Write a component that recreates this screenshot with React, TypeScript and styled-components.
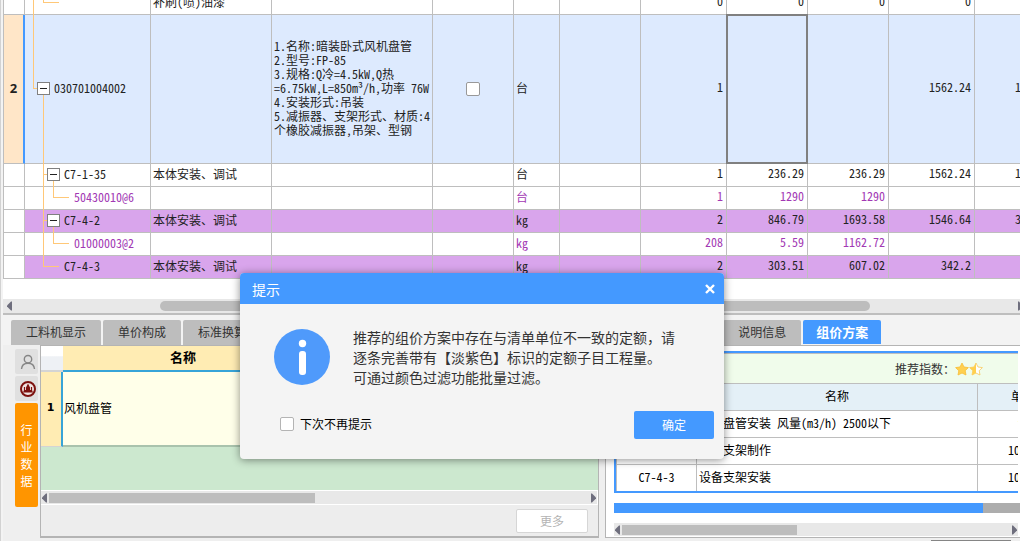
import React from 'react';
import styled, { createGlobalStyle, css } from 'styled-components';

const line = '#bebebe';
const blue = '#4499ff';

const GlobalStyle = createGlobalStyle`
  * { box-sizing: border-box; }
  body {
    margin: 0;
    overflow: hidden;
    background: #f3f3f3;
    color: #222;
    font: 12px/14px "Noto Sans CJK SC", sans-serif;
  }
  button, input { font: inherit; margin: 0; padding: 0; }
`;

const Window = styled.div`
  position: relative;
  display: flex;
  flex-direction: column;
  height: 100vh;
  min-height: 520px;
  padding-left: 2px;
  border-left: 1px solid #d2d2d2;
  overflow: hidden;
`;

/* ---------- bill of quantities grid ---------- */

const GridView = styled.div`
  flex: none;
  height: 299px;
  overflow: hidden;
  background: #fff;
`;

const BillTable = styled.table`
  table-layout: fixed;
  width: 1058px;
  margin-top: -8px;
  border-collapse: separate;
  border-spacing: 0;
  border-left: 1px solid ${line};
  font-feature-settings: "hwid";
`;

type Tone = 'plain' | 'current' | 'marked' | 'material';

const BillRow = styled.tr<{ $tone: Tone }>`
  height: ${p => (p.$tone === 'current' ? 149 : 23)}px;
  color: ${p => (p.$tone === 'material' ? '#a238b4' : '#222')};
  background: ${p => (p.$tone === 'current' ? '#ddeafe' : p.$tone === 'marked' ? '#d9a5ec' : '#fff')};
`;

const Cell = styled.td<{ $align?: 'right' | 'center'; $focused?: boolean }>`
  position: relative;
  padding: 0 3px ${p => (p.$align === 'right' ? 4 : 2)}px 2px;
  border: solid ${line};
  border-width: 0 1px 1px 0;
  text-align: ${p => p.$align ?? 'left'};
  vertical-align: middle;
  white-space: nowrap;
  ${p => p.$focused && css`
    &::after {
      content: '';
      position: absolute;
      inset: -1px;
      border: 2px solid #808080;
    }
  `}
`;

const RowHead = styled.th<{ $current?: boolean }>`
  padding: 0 0 2px;
  border: solid ${line};
  border-width: 0 1px 1px 0;
  background: #fff;
  font: bold 13px/14px "Noto Sans", sans-serif;
  ${p => p.$current && css`
    border-right: 2px solid ${blue};
    background: #ffe6c8;
  `}
`;

const CodeCell = styled(Cell)`
  padding: 0;
`;

const Code = styled.div`
  display: flex;
  align-items: center;
  margin-bottom: -1px;
`;

const CodeText = styled.span`
  padding-bottom: 4px;
`;

const CheckBox = styled.input<{ $light?: boolean }>`
  appearance: none;
  display: inline-block;
  flex: none;
  width: 14px;
  height: 14px;
  border: 1px solid ${p => (p.$light ? '#b4b4b4' : '#999')};
  border-radius: 2px;
  background: #fff;
  vertical-align: middle;
`;

type Branch = { level: number; leaf?: boolean; last?: boolean; open?: boolean; outer?: boolean; height: number };

function TreeGuide({ level, leaf, last, open, outer, height }: Branch) {
  const x = 8 + level * 10;
  const mid = Math.floor(height / 2) - 1;
  const end = leaf ? x + 16 : x + 4;
  const parent = x - 10;
  return (
    <svg width={x + 21} height={height} shapeRendering="crispEdges" fill="none" stroke="#ffc878" aria-hidden="true">
      <path d={`M${x + 0.5} 0V${last ? mid : height}M${x} ${mid + 0.5}H${end}`} />
      {outer && <path d={`M${parent + 0.5} 0V${height}`} />}
      {open && (
        <>
          <path d={`M${x + 10.5} ${mid + 6}V${height}`} />
          <rect x={x + 4.5} y={mid - 5.5} width="12" height="12" fill="#fff" stroke="#808080" />
          <path d={`M${x + 7} ${mid + 0.5}H${x + 14}`} stroke="#222" />
        </>
      )}
    </svg>
  );
}

type Item = {
  tone: Tone; no?: string; code?: string; branch: Branch; name?: string; detail?: string[];
  unit?: string; values: string[]; tick?: boolean;
};

const items: Item[] = [
  { tone: 'plain', branch: { level: 1, leaf: true, last: true, outer: true, height: 23 }, name: '补刷(喷)油漆', values: ['0', '0', '0', '0', '0'] },
  {
    tone: 'current', no: '2', code: '030701004002', branch: { level: 0, open: true, last: true, height: 149 }, tick: true, unit: '台',
    detail: ['1.名称:暗装卧式风机盘管', '2.型号:FP-85', '3.规格:Q冷=4.5kW,Q热', '=6.75kW,L=850m³/h,功率 76W', '4.安装形式:吊装', '5.减振器、支架形式、材质:4', '个橡胶减振器,吊架、型钢'],
    values: ['1', '', '', '1562.24', '1562.24'],
  },
  { tone: 'plain', code: 'C7-1-35', branch: { level: 1, open: true, height: 23 }, name: '本体安装、调试', unit: '台', values: ['1', '236.29', '236.29', '1562.24', '1562.24'] },
  { tone: 'material', code: '50430010@6', branch: { level: 2, leaf: true, last: true, outer: true, height: 23 }, unit: '台', values: ['1', '1290', '1290', '', ''] },
  { tone: 'marked', code: 'C7-4-2', branch: { level: 1, open: true, height: 23 }, name: '本体安装、调试', unit: 'kg', values: ['2', '846.79', '1693.58', '1546.64', '3093.28'] },
  { tone: 'material', code: '01000003@2', branch: { level: 2, leaf: true, last: true, outer: true, height: 23 }, unit: 'kg', values: ['208', '5.59', '1162.72', '', ''] },
  { tone: 'marked', code: 'C7-4-3', branch: { level: 1, leaf: true, last: true, height: 23 }, name: '本体安装、调试', unit: 'kg', values: ['2', '303.51', '607.02', '342.2', '684.4'] },
];

const billColumns = [21, 126, 121, 161, 81, 46, 81, 86, 81, 81, 86, 86];

/* ---------- scroll bars ---------- */

const Track = styled.div<{ $main?: boolean }>`
  display: flex;
  flex: none;
  align-items: center;
  height: ${p => (p.$main ? 14 : 13)}px;
  background: #e8e8e8;
  ${p => p.$main && css`margin-right: -6px;`}
`;

const Space = styled.div<{ $grow: number }>`
  flex: ${p => p.$grow} 0 0;
`;

const Thumb = styled(Space)<{ $round?: boolean }>`
  height: 10px;
  border-radius: ${p => (p.$round ? 5 : 0)}px;
  background: #bdbdbd;
`;

const ArrowBox = styled.svg`
  flex: none;
  width: 8px;
  height: 10px;
  fill: #6e6e7d;
`;

const Arrow = ({ right }: { right?: boolean }) => (
  <ArrowBox viewBox="0 0 8 10" aria-hidden="true">
    <path d={right ? 'M2 0.500L3 0.500L7 4.500V5.500L3 9.500H2Z' : 'M6 0.500H5L1 4.500V5.500L5 9.500H6Z'} />
  </ArrowBox>
);

/* ---------- tab strip ---------- */

const TabStrip = styled.div`
  display: flex;
  flex: none;
  gap: 2px;
  height: 32px;
  padding: 5px 0 0 8px;
  border-top: 2px solid ${line};
`;

const Tab = styled.button<{ $active?: boolean }>`
  flex: none;
  height: ${p => (p.$active ? 24 : 25)}px;
  padding: ${p => (p.$active ? '0 13px' : '0 15px 2px')};
  border: 0;
  border-radius: 2px 2px 0 0;
  background: ${p => (p.$active ? blue : '#bdbdbd')};
  color: ${p => (p.$active ? '#fff' : '#333')};
  font-weight: ${p => (p.$active ? 'bold' : 'normal')};
  font-size: ${p => (p.$active ? 13 : 12)}px;
`;

/* ---------- lower area ---------- */

const Lower = styled.div`
  display: grid;
  flex: 1;
  grid-template-columns: 25px 559fr 6px 415fr;
  min-height: 0;
  padding-left: 12px;
  background: #efefef;
`;

const SideTabs = styled.div`
  display: flex;
  flex-direction: column;
  gap: 2px;
  width: 23px;
  padding-top: 4px;
`;

const SideTab = styled.button<{ $active?: boolean }>`
  display: flex;
  align-items: center;
  justify-content: center;
  height: ${p => (p.$active ? 104 : 25)}px;
  padding: ${p => (p.$active ? '0 5px' : '0 0 0 3px')};
  border: 0;
  border-radius: 2px;
  background: ${p => (p.$active ? '#ff9500' : '#e0e0e0')};
  color: #fff;
  font-size: 12px;
  line-height: 17px;
  word-break: break-all;
`;

const DataPanel = styled.section`
  display: flex;
  flex-direction: column;
  min-width: 0;
  border: 1px solid #b4b4b4;
  border-bottom-width: 2px;
  background: #ededed;
`;

const DataArea = styled.div`
  flex: 1;
  min-height: 0;
  overflow: hidden;
  background: #cce8cf;
`;

const DataTable = styled.table`
  table-layout: fixed;
  width: 100%;
  border-collapse: separate;
  border-spacing: 0;
  color: #000;
  th, td { padding: 0 2px 2px 1px; }
  thead th {
    height: 26px;
    border-bottom: 2px solid #37a4d8;
    background: #ffecb3;
    font-size: 13px;
  }
  thead td {
    border-bottom: 2px solid #d4d4d4;
    background: linear-gradient(#fff 40%, #eef1f5 45%);
  }
  tbody th {
    height: 75px;
    border-right: 2px solid #37a4d8;
    border-bottom: 1px solid #d4d4d4;
    background: #ffecb3;
    font: bold 11px/14px "DejaVu Sans", sans-serif;
  }
  tbody td {
    border-bottom: 2px solid #a9c3ad;
    background: #ffffe9;
  }
`;

const ScrollFrame = styled.div`
  flex: none;
  padding: 1px 1px 1px 0;
  background: #fff;
`;

const DataFooter = styled.div`
  display: flex;
  flex: none;
  justify-content: flex-end;
  padding: 4px 10px 3px;
`;

const MoreButton = styled.button`
  width: 72px;
  height: 24px;
  border: 1px solid #d6d6d6;
  border-radius: 2px;
  background: #fff;
  color: #b4b4b4;
`;

const PlanPanel = styled.section`
  display: flex;
  flex-direction: column;
  min-width: 0;
  padding: 5px 0 0 8px;
  border: 1px solid #b4b4b4;
  border-right: 0;
  background: #fff;
  overflow: hidden;
`;

const PlanBox = styled.div`
  flex: none;
  margin-right: 2px;
  border: solid ${blue};
  border-width: 2px 0 2px 2px;
  overflow: hidden;
`;

const Rating = styled.div`
  display: flex;
  align-items: center;
  justify-content: flex-end;
  height: 31px;
  padding-right: 35px;
  border: solid ${line};
  border-width: 1px 0 1px 1px;
  background: #f0fceb;
  color: #333;
`;

const PlanTable = styled.table`
  table-layout: fixed;
  width: 453px;
  border-collapse: separate;
  border-spacing: 0;
  border-left: 1px solid ${line};
  color: #000;
  font-feature-settings: "hwid";
  th, td {
    height: 27px;
    padding: 0 2px 2px;
    border: solid ${line};
    border-width: 0 1px 1px 0;
    font-weight: normal;
    text-align: center;
    white-space: nowrap;
  }
  th { background: #e4f0f7; }
  td:nth-child(2) { text-align: left; }
  tr:last-child td { height: 26px; border-bottom: 0; }
`;

const Progress = styled.div`
  display: flex;
  flex: none;
  height: 10px;
  margin: 10px 0 auto;
  background: #adadad;
`;

const ProgressFill = styled.div`
  flex: 0 0 91%;
  background: ${blue};
`;

const PlanScroll = styled.div`
  margin-right: 2px;
  padding-bottom: 1px;
`;

const StatusEdge = styled.div`
  display: flex;
  flex: none;
  justify-content: flex-end;
  align-items: flex-end;
  height: 3px;
  padding-right: 9px;
  background: #efefef;
`;

const StatusBox = styled.div`
  width: 80px;
  height: 1px;
  background: #858585;
`;

/* ---------- message dialog ---------- */

const Dialog = styled.div`
  position: absolute;
  left: 239px;
  top: 273px;
  width: 484px;
  border-radius: 4px;
  background: #f4f4f4;
  box-shadow: 0 1px 8px rgba(0, 0, 0, 0.45);
  overflow: hidden;
`;

const DialogHead = styled.header`
  display: flex;
  align-items: center;
  justify-content: space-between;
  height: 31px;
  padding: 0 8px 0 12px;
  background: ${blue};
  color: #fff;
  font-size: 14px;
`;

const CloseButton = styled.button`
  display: flex;
  align-items: center;
  justify-content: center;
  width: 12px;
  height: 20px;
  border: 0;
  background: none;
`;

const DialogBody = styled.div`
  display: flex;
  gap: 23px;
  padding: 23px 34px 24px;
  color: #333;
  font-size: 14px;
  line-height: 20px;
`;

const Message = styled.p`
  margin: 0;
  white-space: nowrap;
`;

const InfoIcon = styled.svg`
  flex: none;
  margin-top: 2px;
`;

const DialogFoot = styled.footer`
  display: flex;
  align-items: center;
  justify-content: space-between;
  padding: 0 10px 20px 40px;
`;

const CheckLabel = styled.label`
  display: flex;
  align-items: center;
  gap: 6px;
  padding-bottom: 2px;
  color: #000;
`;

const OkButton = styled.button`
  width: 80px;
  height: 28px;
  border: 0;
  border-radius: 2px;
  background: ${blue};
  color: #fff;
`;

const starPath = 'M7 1L9 5L13.4 5.6L10.2 8.7L11 13L7 11L3 13L3.8 8.7L0.6 5.6L5 5Z';

const tabs = ['工料机显示', '单价构成', '标准换算', '换算信息', '安装费用', '特征及内容', '工程量明细', '反查图形工程量', '说明信息', '组价方案'];

const plans = [
  ['C7-1-35', '风机盘管安装 风量(m3/h) 2500以下', '台'],
  ['C7-4-2', '设备支架制作', '100kg'],
  ['C7-4-3', '设备支架安装', '100kg'],
];

export default function App() {
  return (
    <Window>
      <GlobalStyle />
      <GridView>
        <BillTable>
          <colgroup>{billColumns.map((w, i) => <col key={i} width={w} />)}</colgroup>
          <tbody>
            {items.map((item, i) => (
              <BillRow key={i} $tone={item.tone}>
                <RowHead $current={item.tone === 'current'}>{item.no}</RowHead>
                <CodeCell>
                  <Code><TreeGuide {...item.branch} /><CodeText>{item.code}</CodeText></Code>
                </CodeCell>
                <Cell>{item.name}</Cell>
                <Cell>{item.detail?.map(text => <div key={text}>{text}</div>)}</Cell>
                <Cell $align="center">{item.tick && <CheckBox type="checkbox" aria-label="主要清单" />}</Cell>
                <Cell>{item.unit}</Cell>
                <Cell />
                {item.values.map((value, n) => (
                  <Cell key={n} $align="right" $focused={item.tone === 'current' && n === 1}>{value}</Cell>
                ))}
              </BillRow>
            ))}
          </tbody>
        </BillTable>
      </GridView>
      <Track $main>
        <Space $grow={3} /><Arrow /><Space $grow={146} /><Thumb $grow={710} $round /><Space $grow={146} /><Arrow right /><Space $grow={2} />
      </Track>
      <TabStrip>
        {tabs.map(name => <Tab key={name} $active={name === '组价方案'}>{name}</Tab>)}
      </TabStrip>

      <Lower>
        <SideTabs>
          <SideTab aria-label="个人数据">
            <svg width="16" height="16" viewBox="0 0 16 16" fill="none" stroke="#858585" strokeWidth="1.4">
              <circle cx="8" cy="5.2" r="3.7" />
              <path d="M1.5 15C1.8 11.500 4 9.200 8 9.200S14.200 11.500 14.500 15" />
            </svg>
          </SideTab>
          <SideTab aria-label="企业数据">
            <svg width="16" height="16" viewBox="0 0 16 16" fill="none">
              <circle cx="8" cy="8" r="7" fill="#f0e4e2" stroke="#7d1210" strokeWidth="2" />
              <path d="M8 2.500L10 6.500V9H12L13 11.500H3L4 9H6V6.500Z" fill="#7d1210" />
              <path d="M4.500 6V9M11.500 6V9" stroke="#7d1210" strokeWidth="1.2" />
            </svg>
          </SideTab>
          <SideTab $active>行业数据</SideTab>
        </SideTabs>

        <DataPanel>
          <DataArea>
            <DataTable>
              <colgroup><col width="22" /><col width="241" /><col /></colgroup>
              <thead><tr><td /><th>名称</th><th /></tr></thead>
              <tbody><tr><th>1</th><td>风机盘管</td><td /></tr></tbody>
            </DataTable>
          </DataArea>
          <ScrollFrame>
            <Track>
              <Arrow /><Thumb $grow={266} /><Space $grow={274} /><Arrow right />
            </Track>
          </ScrollFrame>
          <DataFooter><MoreButton disabled>更多</MoreButton></DataFooter>
        </DataPanel>
        <div />
        <PlanPanel>
          <PlanBox>
            <Rating>
              推荐指数：
              <svg width="28" height="14" viewBox="0 0 28 14" role="img" aria-label="1.5">
                <path d={starPath} fill="#ffd04f" stroke="#f8bd35" strokeWidth=".8" />
                <g transform="translate(14)">
                  <path d={starPath} fill="#fff" stroke="#f8c95a" strokeWidth=".8" />
                  <path d="M7 1V11L3 13L3.800 8.700L0.600 5.600L5 5Z" fill="#ffd04f" />
                </g>
              </svg>
            </Rating>
            <PlanTable>
              <colgroup><col width="80" /><col width="281" /><col width="91" /></colgroup>
              <thead><tr><th>编码</th><th>名称</th><th>单位</th></tr></thead>
              <tbody>
                {plans.map(row => <tr key={row[0]}>{row.map(text => <td key={text}>{text}</td>)}</tr>)}
              </tbody>
            </PlanTable>
          </PlanBox>
          <Progress><ProgressFill /></Progress>
          <PlanScroll>
            <Track>
              <Arrow /><Thumb $grow={175} /><Space $grow={213} /><Arrow right />
            </Track>
          </PlanScroll>
        </PlanPanel>
      </Lower>
      <StatusEdge><StatusBox /></StatusEdge>

      <Dialog role="dialog" aria-labelledby="dialog-title">
        <DialogHead>
          <span id="dialog-title">提示</span>
          <CloseButton aria-label="关闭">
            <svg width="12" height="10" viewBox="0 0 12 10" stroke="#fff" strokeWidth="2.400"><path d="M2 1L10 9M10 1L2 9" /></svg>
          </CloseButton>
        </DialogHead>
        <DialogBody>
          <InfoIcon width="56" height="56" viewBox="0 0 56 56" aria-hidden="true">
            <circle cx="28" cy="28" r="28" fill="#4f9afb" />
            <circle cx="28.500" cy="14.500" r="3.700" fill="#fff" />
            <rect x="25" y="22" width="7" height="24" rx="3" fill="#fff" />
          </InfoIcon>
          <Message>
            推荐的组价方案中存在与清单单位不一致的定额，请<br />
            逐条完善带有【淡紫色】标识的定额子目工程量。<br />
            可通过颜色过滤功能批量过滤。
          </Message>
        </DialogBody>
        <DialogFoot>
          <CheckLabel><CheckBox type="checkbox" $light />下次不再提示</CheckLabel>
          <OkButton>确定</OkButton>
        </DialogFoot>
      </Dialog>
    </Window>
  );
}
